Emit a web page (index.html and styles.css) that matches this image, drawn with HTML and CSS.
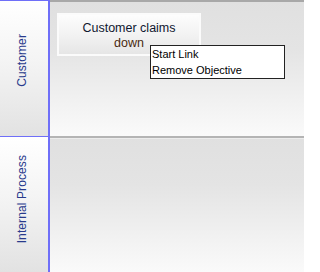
FILE: index.html
```html
<!DOCTYPE html>
<html>
<head>
<meta charset="utf-8">
<link rel="stylesheet" href="styles.css">
</head>
<body>
<div class="board">
  <div class="lane lane-first">
    <div class="label"><span class="label-text">Customer</span></div>
    <div class="content">
      <div class="card">
        <div class="card-line">Customer claims</div>
        <div class="card-line card-line-alt">down</div>
      </div>
      <div class="menu">
        <div class="menu-item">Start Link</div>
        <div class="menu-item">Remove Objective</div>
      </div>
    </div>
  </div>
  <div class="lane lane-second">
    <div class="label"><span class="label-text">Internal Process</span></div>
    <div class="content"></div>
  </div>
</div>
</body>
</html>
```
FILE: styles.css
```css
html, body {
  margin: 0;
  padding: 0;
}
body {
  width: 304px;
  height: 272px;
  overflow: hidden;
  font-family: "Liberation Sans", Arial, sans-serif;
  background: #fff;
}
.board {
  display: flex;
  flex-direction: column;
  width: 304px;
  height: 272px;
}
.lane {
  display: flex;
}
.lane-first {
  height: 136px;
}
.lane-second {
  flex: 1;
}
.label {
  width: 50px;
  box-sizing: border-box;
  border-right: 2px solid #6f6ff8;
  border-top: 1px solid #6f6ff8;
  background: linear-gradient(to bottom, #ffffff 0%, #f4f4f4 45%, #e2e2e2 100%);
  display: flex;
  align-items: center;
  justify-content: center;
  padding-right: 4px;
}
.lane-first .label {
  padding-bottom: 16px;
}
.lane-second .label {
  padding-bottom: 10px;
}
.label-text {
  writing-mode: vertical-rl;
  transform: rotate(180deg);
  font-size: 12px;
  color: #283a8c;
  white-space: nowrap;
  letter-spacing: 0.1px;
}
.content {
  flex: 1;
  position: relative;
  border-top: 2px solid #a8a8a8;
  background: linear-gradient(to bottom, #e0e0e0 0%, #e4e4e4 35%, #fafafa 100%);
}
.lane-second .content {
  border-top: 2px solid #b4b4b4;
  box-shadow: inset 0 1px 0 #ececec;
}
.card {
  position: absolute;
  left: 7px;
  top: 11px;
  width: 144px;
  height: 43px;
  box-sizing: border-box;
  border: 2px solid #fbfbfb;
  background: linear-gradient(to bottom, #fdfdfd 0%, #f0f0f0 60%, #e6e6e6 100%);
  text-align: center;
  font-size: 12.5px;
  line-height: 15px;
  padding-top: 6px;
  color: #101830;
}
.card-line-alt {
  color: #4a2a10;
}
.menu {
  position: absolute;
  left: 100px;
  top: 43px;
  width: 135px;
  height: 34px;
  box-sizing: border-box;
  border: 1px solid #222;
  background: #fff;
  font-size: 11px;
  color: #000;
  padding-left: 1px;
}
.menu-item {
  height: 16px;
  line-height: 16px;
}
```
